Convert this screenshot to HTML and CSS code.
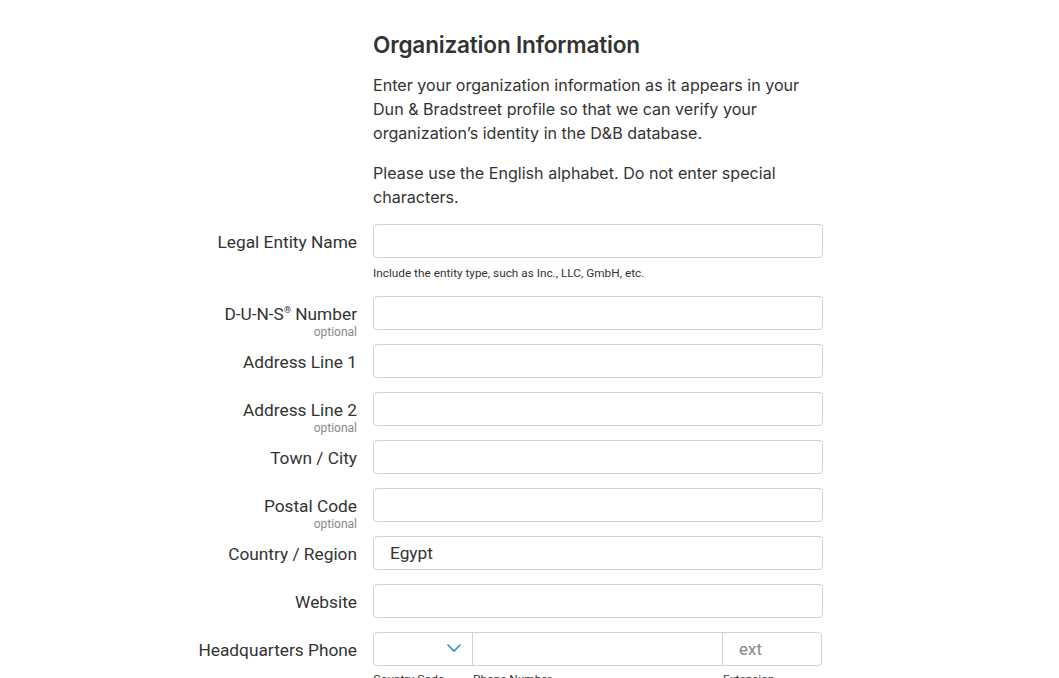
FILE: index.html
```html
<!DOCTYPE html>
<html lang="en">
<head>
<meta charset="utf-8">
<title>Organization Information</title>
<link rel="stylesheet" href="styles.css">
</head>
<body>
<main class="page">
  <div class="intro">
    <h1 class="title">Organization Information</h1>
    <p class="lead">Enter your organization information as it appears in your Dun &amp; Bradstreet profile so that we can verify your organization’s identity in the D&amp;B database.</p>
    <p class="lead">Please use the English alphabet. Do not enter special characters.</p>
  </div>
  <form class="form">
    <div class="row">
      <label class="label"><span class="ltext">Legal Entity Name</span></label>
      <div class="field">
        <input class="input" type="text">
        <div class="hint">Include the entity type, such as Inc., LLC, GmbH, etc.</div>
      </div>
    </div>
    <div class="row">
      <label class="label"><span class="ltext">D-U-N-S<sup class="reg">®</sup> Number</span><span class="opt">optional</span></label>
      <div class="field"><input class="input" type="text"></div>
    </div>
    <div class="row">
      <label class="label"><span class="ltext">Address Line 1</span></label>
      <div class="field"><input class="input" type="text"></div>
    </div>
    <div class="row">
      <label class="label"><span class="ltext">Address Line 2</span><span class="opt">optional</span></label>
      <div class="field"><input class="input" type="text"></div>
    </div>
    <div class="row">
      <label class="label"><span class="ltext">Town / City</span></label>
      <div class="field"><input class="input" type="text"></div>
    </div>
    <div class="row">
      <label class="label"><span class="ltext">Postal Code</span><span class="opt">optional</span></label>
      <div class="field"><input class="input" type="text"></div>
    </div>
    <div class="row">
      <label class="label"><span class="ltext">Country / Region</span></label>
      <div class="field"><div class="input select-like">Egypt</div></div>
    </div>
    <div class="row">
      <label class="label"><span class="ltext">Website</span></label>
      <div class="field"><input class="input" type="text"></div>
    </div>
    <div class="row">
      <label class="label"><span class="ltext">Headquarters Phone</span></label>
      <div class="field">
        <div class="phone">
          <div class="ph code">
            <svg class="chev" width="16" height="10" viewBox="0 0 16 10"><path d="M1.5 1.5 L8 8 L14.5 1.5" fill="none" stroke="#2f8fd8" stroke-width="1.6"/></svg>
          </div>
          <div class="ph num"></div>
          <div class="ph ext">ext</div>
        </div>
        <div class="phone-caps">
          <span class="cap c1">Country Code</span>
          <span class="cap c2">Phone Number</span>
          <span class="cap c3">Extension</span>
        </div>
      </div>
    </div>
  </form>
</main>
</body>
</html>
```
FILE: styles.css
```css
html, body {
  margin: 0;
  padding: 0;
  background: #fff;
}
body {
  font-family: Inter, "Noto Sans", sans-serif;
  color: #333;
}
.page {
  padding: 30px 0 0 0;
  width: 1059px;
}
.intro {
  margin-left: 373px;
  width: 450px;
}
.title {
  font-size: 22.6px;
  font-weight: 600;
  line-height: 30px;
  margin: 0 0 13px 0;
  color: #333;
  letter-spacing: -0.2px;
}
.lead {
  font-size: 16.1px;
  line-height: 24px;
  margin: 0 0 16px 0;
  color: #333;
}
.lead:last-child {
  margin-bottom: 15px;
}
.form {
  display: flex;
  flex-direction: column;
  gap: 14px;
  margin: 0;
}
.row {
  display: grid;
  grid-template-columns: 357px 450px;
  column-gap: 16px;
  align-items: start;
}
.label {
  box-sizing: border-box;
  height: 34px;
  text-align: right;
  font-family: Roboto, sans-serif;
  font-size: 17.3px;
  color: #333;
  padding-top: 8px;
  line-height: 20px;
  display: flex;
  flex-direction: column;
  align-items: flex-end;
  overflow: visible;
}
.ltext {
  white-space: nowrap;
}
.reg {
  font-size: 9px;
  vertical-align: 7px;
  line-height: 0;
}
.opt {
  font-size: 12px;
  color: #888;
  line-height: 14px;
  margin-top: 1px;
  white-space: nowrap;
}
.field {
  display: flex;
  flex-direction: column;
}
.input {
  box-sizing: border-box;
  height: 34px;
  width: 450px;
  border: 1px solid #d2d2d2;
  border-radius: 4px;
  background: #fff;
  margin: 0;
  padding: 0 16px;
  font-family: Roboto, sans-serif;
  font-size: 17.3px;
  color: #333;
}
.select-like {
  display: flex;
  align-items: center;
}
.hint {
  font-family: Roboto, sans-serif;
  font-size: 11.8px;
  color: #333;
  margin-top: 8px;
  line-height: 14px;
  height: 16px;
}
.phone {
  display: flex;
  height: 34px;
  width: 449px;
  box-sizing: border-box;
  border: 1px solid #d2d2d2;
  border-radius: 4px;
}
.ph {
  box-sizing: border-box;
  height: 100%;
  display: flex;
  align-items: center;
}
.code {
  width: 99px;
  justify-content: flex-end;
  padding-right: 10px;
  border-right: 1px solid #d2d2d2;
}
.chev {
  margin-top: -2px;
}
.num {
  width: 250px;
  border-right: 1px solid #d2d2d2;
}
.ext {
  flex: 1;
  padding-left: 16px;
  font-family: Roboto, sans-serif;
  font-size: 17px;
  color: #888;
}
.phone-caps {
  display: flex;
  font-family: Roboto, sans-serif;
  font-size: 11.8px;
  color: #333;
  margin-top: 6px;
}
.c1 { width: 100px; }
.c2 { width: 250px; }
```
